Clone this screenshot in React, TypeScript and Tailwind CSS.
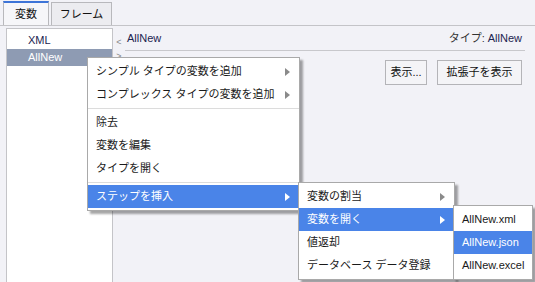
import React from 'react';

const font = "font-['Liberation_Sans','Noto_Sans_CJK_JP',sans-serif]";

type Item = { label: string; sub?: boolean; active?: boolean } | 'sep';

const Arrow: React.FC<{ active?: boolean }> = ({ active }) => (
  <svg width="5" height="8" viewBox="0 0 5 8" className="shrink-0">
    <path d="M0 0 L5 4 L0 8 Z" fill={active ? '#ffffff' : '#8a8a8a'} />
  </svg>
);

const Menu: React.FC<{ items: Item[]; className: string }> = ({ items, className }) => (
  <div
    className={`absolute bg-white border border-[#a9a9a9] pt-[2px] pb-[2px] shadow-[3px_3px_2px_rgba(0,0,0,0.35)] ${className}`}
  >
    {items.map((it, i) =>
      it === 'sep' ? (
        <div key={i} className="h-px bg-[#dcdcdc] my-[2px]" />
      ) : (
        <div
          key={i}
          className={`h-[23px] flex items-center justify-between pl-[8px] pr-[9px] text-[11px] whitespace-nowrap ${
            it.active ? 'bg-[#4a84e8] text-white' : 'text-[#1a1a1a]'
          }`}
        >
          <span>{it.label}</span>
          {it.sub && <Arrow active={it.active} />}
        </div>
      )
    )}
  </div>
);

export default function App() {
  return (
    <div className={`relative w-[535px] h-[282px] overflow-hidden bg-[#f2f2f7] flex flex-col ${font}`}>
      {/* tabs */}
      <div className="h-[26px] flex items-end gap-[2px] pl-[3px] border-b border-[#c4c4c8] shrink-0">
        <div className="h-[24px] w-[46px] flex items-center justify-center border border-b-0 border-[#b8b8bc] border-t-2 border-t-[#3d74d8] bg-[#f6f6f9] text-[11px] text-[#111]">
          変数
        </div>
        <div className="h-[23px] w-[61px] flex items-center justify-center border border-b-0 border-[#b8b8bc] bg-[#ececf0] text-[11px] text-[#111]">
          フレーム
        </div>
      </div>

      {/* body */}
      <div className="flex flex-1 pl-[6px] pt-[2px]">
        <div className="w-[107px] shrink-0 bg-white border border-b-0 border-[#c4c4c8] pt-[3px]">
          <div className="h-[17px] flex items-center pl-[21px] text-[11px] text-[#1c2450]">XML</div>
          <div className="h-[17px] flex items-center pl-[21px] text-[11px] text-white bg-[#8e9bb3]">AllNew</div>
        </div>

        <div className="flex-1 flex">
          <div className="w-[12px] shrink-0 flex flex-col items-center pt-[9px] text-[#888] text-[9px] leading-[11px]">
            <span>&lt;</span>
            <span className="mt-[3px]">&gt;</span>
          </div>
          <div className="flex-1 pr-[10px]">
            <div className="h-[23px] flex items-end justify-between pb-[4px] border-b border-[#c8c8cc] text-[11px]">
              <span className="text-[#1c2450] pl-[2px]">AllNew</span>
              <span className="text-[#333] pr-[3px]">
                タイプ: <span className="text-[#1c2450]">AllNew</span>
              </span>
            </div>
            <div className="flex justify-end gap-[10px] mt-[9px] pr-[3px]">
              <div className="h-[25px] w-[42px] flex items-center justify-center border border-[#b4b4b8] bg-[#f4f4f7] text-[11px] text-[#111]">
                表示...
              </div>
              <div className="h-[25px] w-[85px] flex items-center justify-center border border-[#b4b4b8] bg-[#f4f4f7] text-[11px] text-[#111]">
                拡張子を表示
              </div>
            </div>
          </div>
        </div>
      </div>

      {/* context menus */}
      <Menu
        className="left-[87px] top-[57px] w-[213px]"
        items={[
          { label: 'シンプル タイプの変数を追加', sub: true },
          { label: 'コンプレックス タイプの変数を追加', sub: true },
          'sep',
          { label: '除去' },
          { label: '変数を編集' },
          { label: 'タイプを開く' },
          'sep',
          { label: 'ステップを挿入', sub: true, active: true },
        ]}
      />
      <Menu
        className="left-[298px] top-[182px] w-[157px]"
        items={[
          { label: '変数の割当', sub: true },
          { label: '変数を開く', sub: true, active: true },
          { label: '値返却' },
          { label: 'データベース データ登録' },
        ]}
      />
      <Menu
        className="left-[453px] top-[205px] w-[80px]"
        items={[
          { label: 'AllNew.xml' },
          { label: 'AllNew.json', active: true },
          { label: 'AllNew.excel' },
        ]}
      />
    </div>
  );
}
